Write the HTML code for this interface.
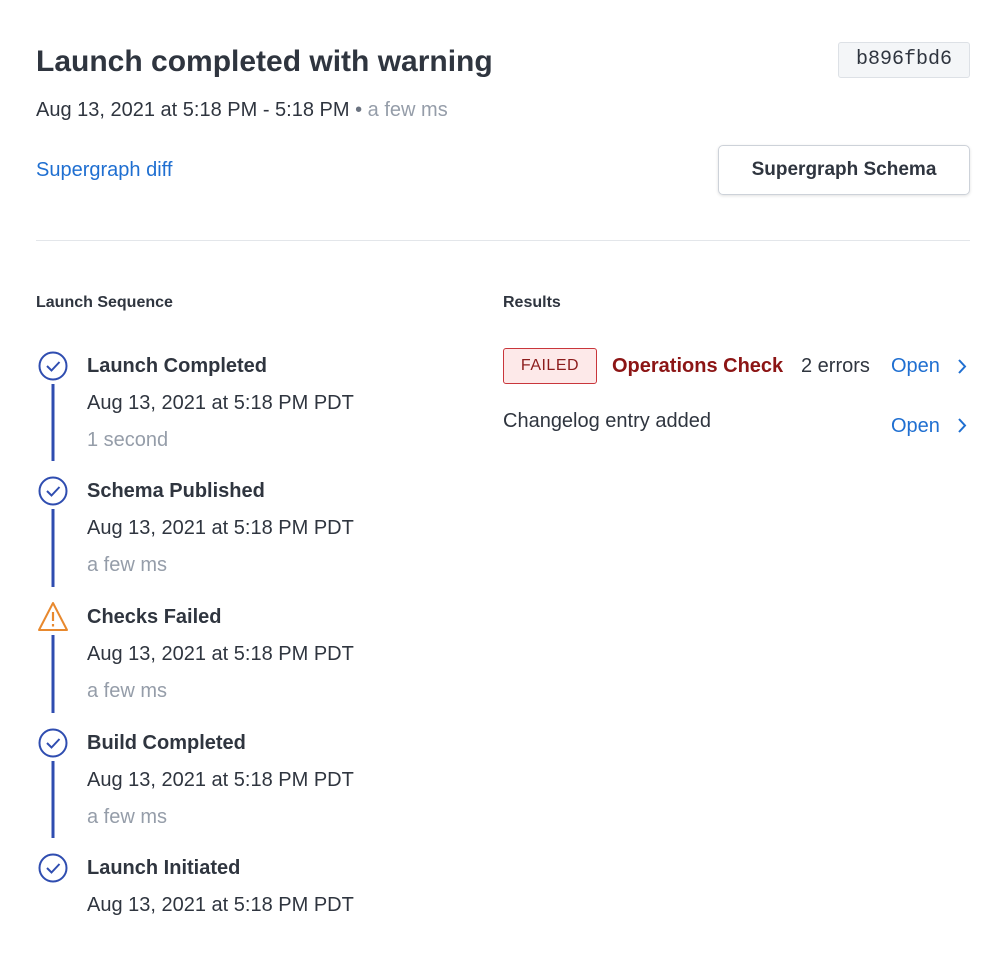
<!DOCTYPE html>
<html><head><style>
body{margin:0;background:#fff;font-family:"Liberation Sans",sans-serif;color:#2f353f;}
.a{position:absolute;white-space:nowrap;}
.t{font-size:20px;font-weight:bold;}
.d{font-size:20px;}
.g{font-size:20px;color:#959da9;}
.blue{color:#1f6fd1;}
</style></head><body>
<div class="a" style="left:36px;top:45px;font-size:30px;font-weight:bold;color:#2f353f;">Launch completed with warning</div>
<div class="a" style="left:838px;top:42px;width:130px;height:34px;background:#f4f6f8;border:1px solid #dde1e6;border-radius:3px;font-family:'Liberation Mono',monospace;font-size:20px;line-height:34px;text-align:center;color:#2f353f;">b896fbd6</div>
<div class="a" style="left:36px;top:99px;font-size:20px;">Aug 13, 2021 at 5:18 PM - 5:18 PM <span style="color:#6b7380">•</span> <span style="color:#959da9">a few ms</span></div>
<div class="a blue" style="left:36px;top:159px;font-size:20px;">Supergraph diff</div>
<div class="a" style="left:718px;top:145px;width:250px;height:48px;border:1px solid #cdd2d9;border-radius:5px;box-shadow:0 1px 3px rgba(0,0,0,.12);font-size:19px;font-weight:bold;line-height:48px;text-align:center;">Supergraph Schema</div>
<div class="a" style="left:36px;top:240px;width:934px;height:1px;background:#e3e6ea;"></div>
<div class="a" style="left:36px;top:294px;font-size:16px;font-weight:bold;">Launch Sequence</div>
<div class="a" style="left:503px;top:294px;font-size:16px;font-weight:bold;">Results</div>

<svg class="a" style="left:0;top:0" width="100" height="954">
<g fill="none" stroke="#2f4db0" stroke-width="2">
<circle cx="53" cy="366" r="13.5"/><path d="M47 366l4.5 4.5 8-8.5"/>
<circle cx="53" cy="491" r="13.5"/><path d="M47 491l4.5 4.5 8-8.5"/>
<circle cx="53" cy="743" r="13.5"/><path d="M47 743l4.5 4.5 8-8.5"/>
<circle cx="53" cy="868" r="13.5"/><path d="M47 868l4.5 4.5 8-8.5"/>
</g>
<g stroke="#2f4db0" stroke-width="3">
<line x1="53" y1="384" x2="53" y2="461"/>
<line x1="53" y1="509" x2="53" y2="587"/>
<line x1="53" y1="635" x2="53" y2="713"/>
<line x1="53" y1="761" x2="53" y2="838"/>
</g>
<path d="M53 603L39 630H67Z" fill="none" stroke="#e8892e" stroke-width="2" stroke-linejoin="round"/>
<path d="M53 612v9M53 624v2.5" stroke="#e8892e" stroke-width="2.2"/>
</svg>

<div class="a t" style="left:87px;top:355px;">Launch Completed</div>
<div class="a d" style="left:87px;top:392px;">Aug 13, 2021 at 5:18 PM PDT</div>
<div class="a g" style="left:87px;top:429px;">1 second</div>
<div class="a t" style="left:87px;top:480px;">Schema Published</div>
<div class="a d" style="left:87px;top:517px;">Aug 13, 2021 at 5:18 PM PDT</div>
<div class="a g" style="left:87px;top:554px;">a few ms</div>
<div class="a t" style="left:87px;top:606px;">Checks Failed</div>
<div class="a d" style="left:87px;top:643px;">Aug 13, 2021 at 5:18 PM PDT</div>
<div class="a g" style="left:87px;top:680px;">a few ms</div>
<div class="a t" style="left:87px;top:732px;">Build Completed</div>
<div class="a d" style="left:87px;top:769px;">Aug 13, 2021 at 5:18 PM PDT</div>
<div class="a g" style="left:87px;top:806px;">a few ms</div>
<div class="a t" style="left:87px;top:857px;">Launch Initiated</div>
<div class="a d" style="left:87px;top:894px;">Aug 13, 2021 at 5:18 PM PDT</div>

<div class="a" style="left:503px;top:348px;width:92px;height:34px;background:#fde9e9;border:1px solid #c9363b;border-radius:3px;font-size:16px;line-height:34px;text-align:center;color:#8c1c1c;letter-spacing:.5px;">FAILED</div>
<div class="a" style="left:612px;top:355px;font-size:20px;font-weight:bold;color:#8c1515;">Operations Check</div>
<div class="a" style="left:801px;top:355px;font-size:20px;">2 errors</div>
<div class="a blue" style="left:891px;top:355px;font-size:20px;">Open</div>
<div class="a" style="left:503px;top:410px;font-size:20px;">Changelog entry added</div>
<div class="a blue" style="left:891px;top:415px;font-size:20px;">Open</div>
<svg class="a" style="left:955px;top:356px" width="16" height="80" fill="none" stroke="#1f6fd1" stroke-width="2">
<path d="M4 4l6 6.5-6 6.5"/><path d="M4 63l6 6.5-6 6.5"/>
</svg>
</body></html>
